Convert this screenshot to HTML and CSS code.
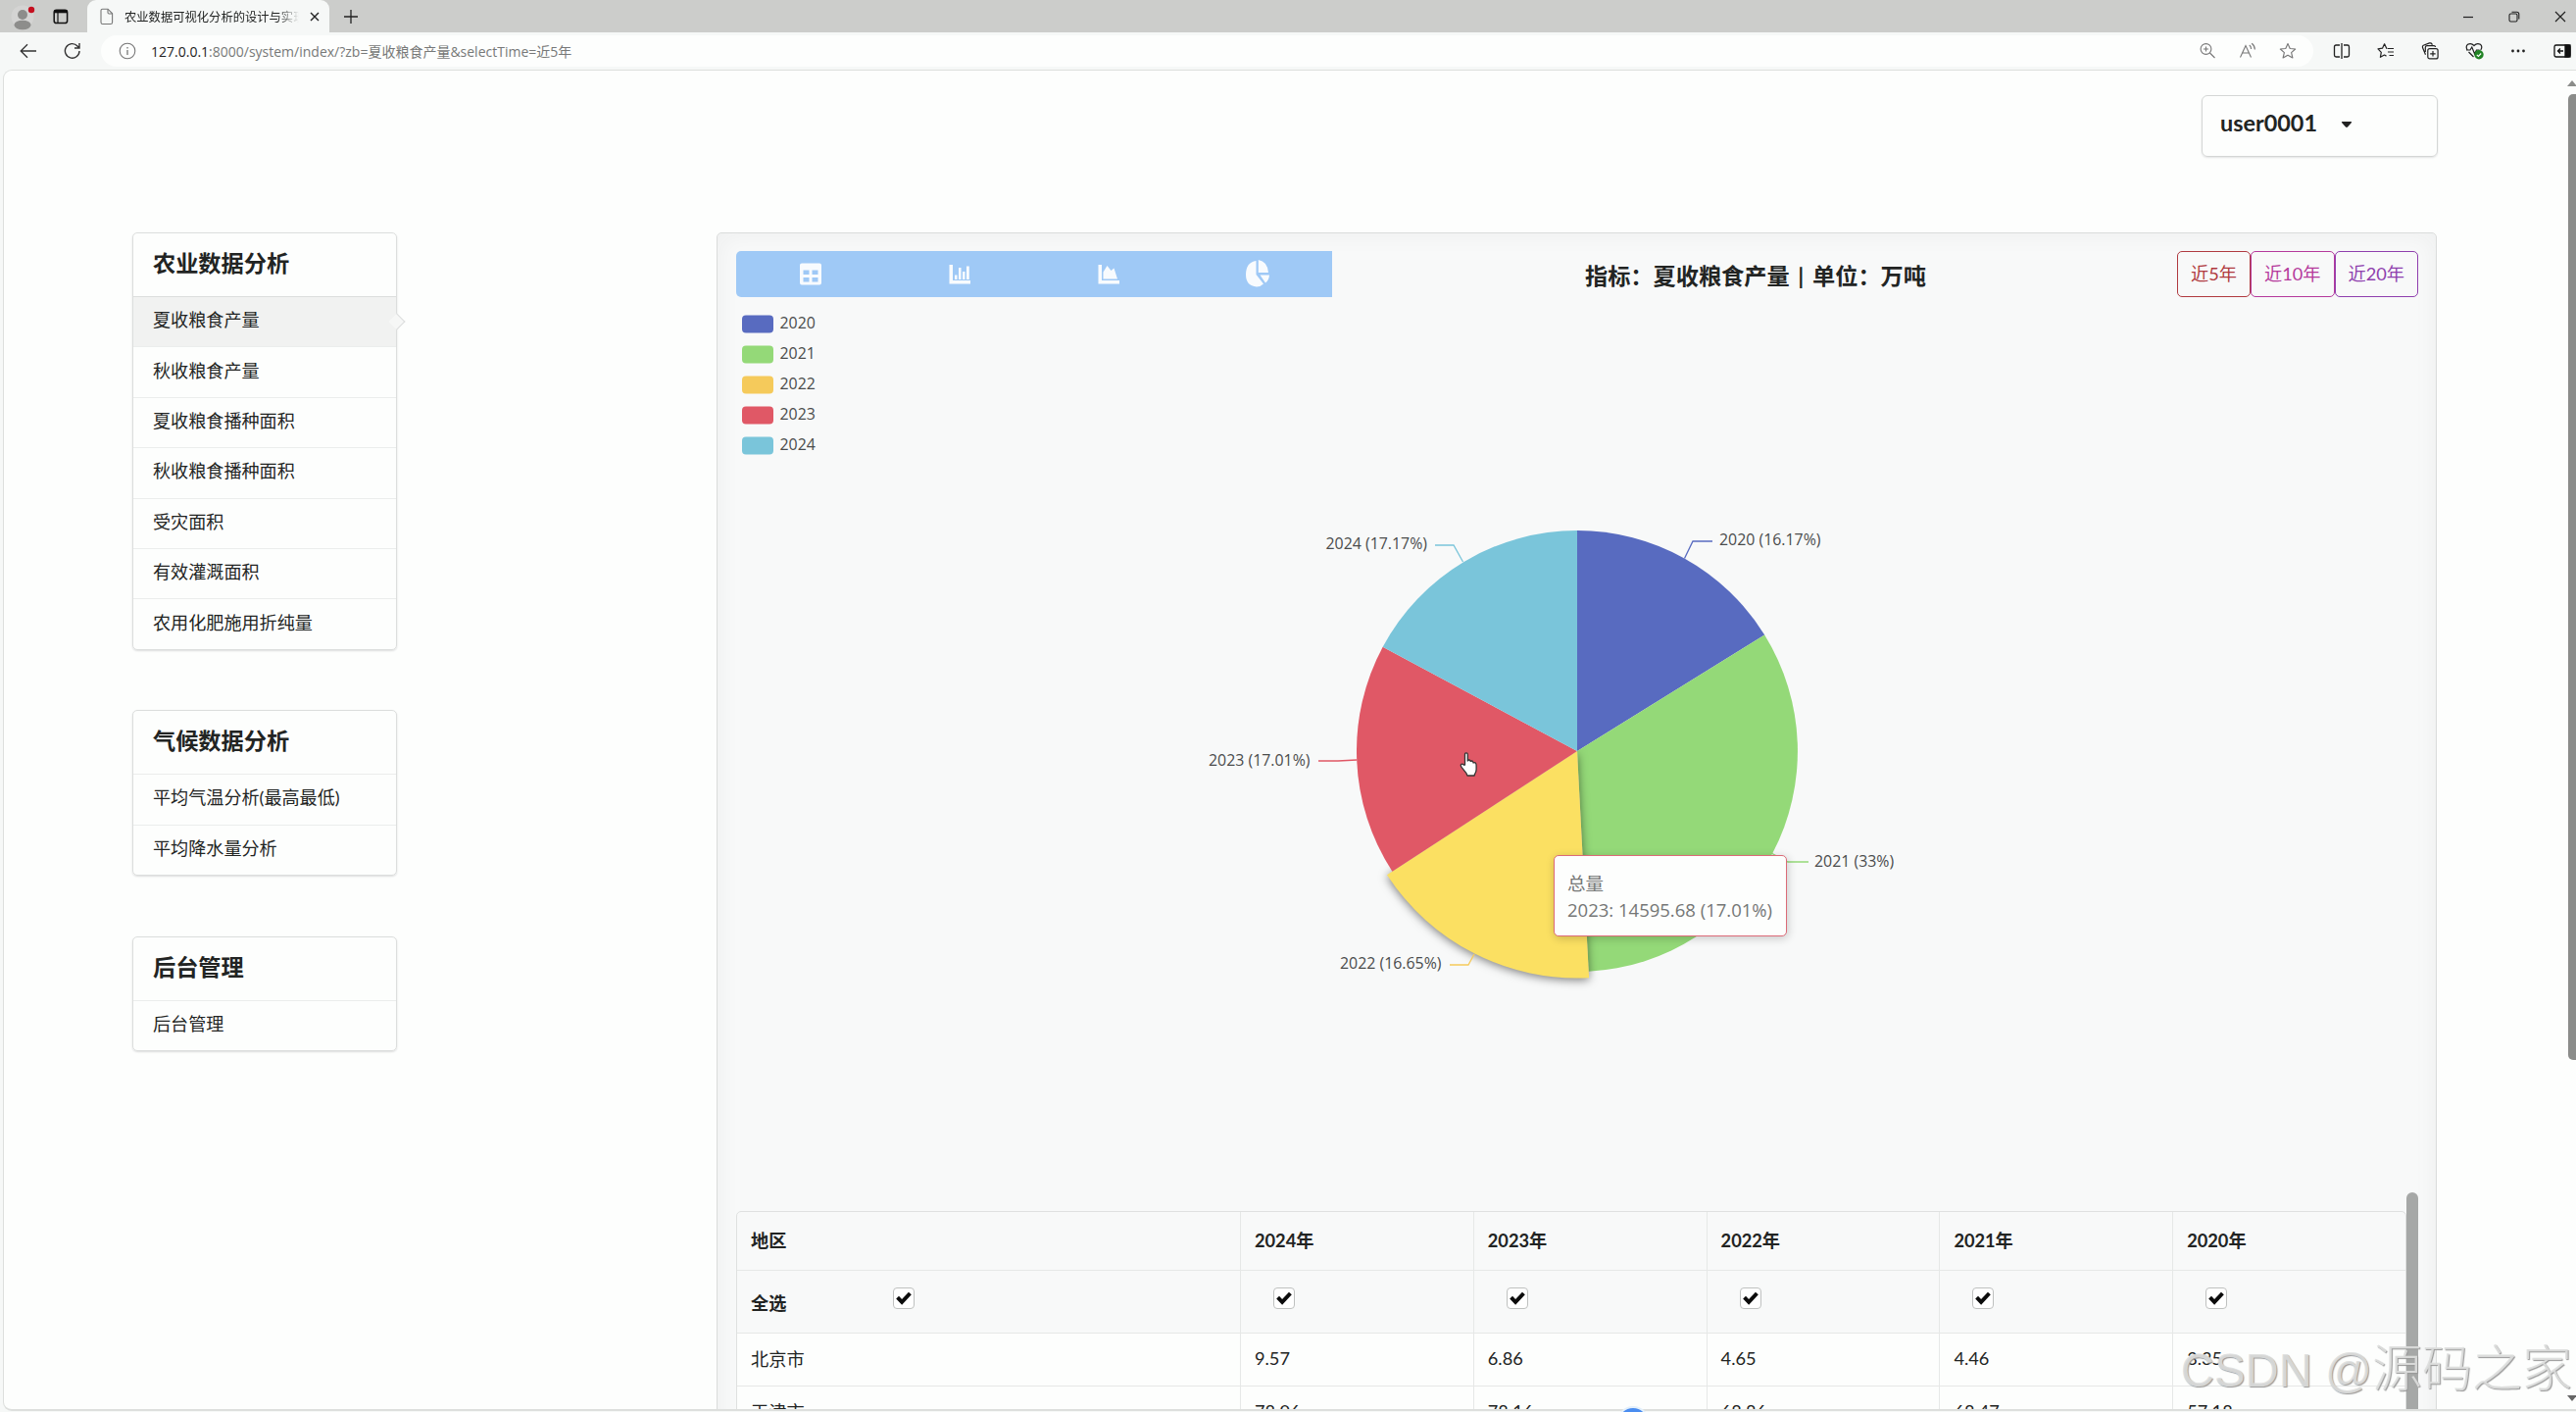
FILE: index.html
```html
<!DOCTYPE html>
<html lang="zh-CN">
<head>
    <meta charset="UTF-8">
    <meta name="viewport" content="width=device-width, initial-scale=1.0">
    <title>农业数据可视化分析的设计与实现</title>
    <link rel="stylesheet" href="styles.css">
</head>
<body>
    <!-- Browser tabs -->
    <div class="tab-strip">
        <svg class="profile" width="28" height="28" viewBox="0 0 28 28">
            <circle cx="13" cy="14" r="11.5" fill="#d4d4d3"/>
            <circle cx="13" cy="12" r="5" fill="#8d8d8b"/>
            <ellipse cx="13" cy="22.5" rx="8.5" ry="4.8" fill="#8d8d8b"/>
            <circle cx="22" cy="7" r="3.2" fill="#c50f1f"/>
        </svg>
        <svg class="tab-menu" width="16" height="16" viewBox="0 0 16 16" fill="none" stroke="#111" stroke-width="1.5">
            <rect x="1.2" y="1.2" width="13.4" height="13.4" rx="2.4"/>
            <path d="M1.5 2.8h13" stroke-width="3"/>
            <path d="M5 4v10.500" stroke-width="1.2"/>
        </svg>
        <div class="tab">
            <svg width="14" height="18" viewBox="0 0 14 18" fill="none" stroke="#777" stroke-width="1.1">
                <path d="M2.500 1.200H8l4.600 4.600v8.900q0 1.800-1.800 1.800H2.800Q1 16.500 1 14.700V2.700q0-1.500 1.500-1.500z"/>
                <path d="M8 1.200v3.600q0 1.200 1.200 1.200h3.400"/>
            </svg>
            <span class="tab-title">农业数据可视化分析的设计与实现</span>
            <svg width="10" height="10" viewBox="0 0 10 10" stroke="#222" stroke-width="1.4"><path d="M1 1l8 8M9 1l-8 8"/></svg>
        </div>
        <svg class="new-tab" width="16" height="16" viewBox="0 0 16 16" stroke="#222" stroke-width="1.3"><path d="M8 1v14M1 8h14"/></svg>
        <div class="window-buttons">
            <svg width="12" height="12" viewBox="0 0 12 12" fill="none" stroke="#222" stroke-width="1.2"><path d="M1 6.500h10"/></svg>
            <svg width="12" height="12" viewBox="0 0 12 12" fill="none" stroke="#222" stroke-width="1.1">
                <rect x="1" y="3" width="8" height="8" rx="1.5"/>
                <path d="M3.500 1.300h5q2.300 0 2.300 2.300v5"/>
            </svg>
            <svg width="12" height="12" viewBox="0 0 12 12" fill="none" stroke="#222" stroke-width="1.2"><path d="M1 1l10 10M11 1L1 11"/></svg>
        </div>
    </div>

    <!-- Address bar -->
    <div class="toolbar">
        <svg class="nav-back" width="18" height="16" viewBox="0 0 18 16" fill="none" stroke="#333" stroke-width="1.3"><path d="M17 8H1.500M8 1.200L1.200 8 8 14.800"/></svg>
        <svg class="nav-reload" width="18" height="18" viewBox="0 0 18 18" fill="none" stroke="#333" stroke-width="1.4"><path d="M16 9a7.300 7.300 0 1 1-2-5.100L16 6M16 1v5h-5"/></svg>
        <div class="address">
            <svg width="18" height="18" viewBox="0 0 18 18" fill="none" stroke="#777" stroke-width="1.1">
                <circle cx="9" cy="9" r="7.800"/>
                <path d="M9 8v5M9 5v1.500" stroke-width="1.3"/>
            </svg>
            <span class="url"><b>127.0.0.1</b>:8000/system/index/?zb=夏收粮食产量&amp;selectTime=近5年</span>
            <div class="address-tools">
                <svg width="18" height="18" viewBox="0 0 18 18" fill="none" stroke="#777" stroke-width="1.1">
                    <circle cx="7.500" cy="7" r="5.400"/><path d="M11.500 11l5 5M7.500 4.500v5M5 7h5"/>
                </svg>
                <svg width="18" height="18" viewBox="0 0 18 18" fill="none" stroke="#777" stroke-width="1.1">
                    <path d="M1.500 15.500L7 3.500l5.500 12M3.600 11h6.900M10.800 3q1.700 1.300 1.800 4M13.200 1.300q3 2.200 3.200 6.200"/>
                </svg>
                <svg width="18" height="18" viewBox="0 0 18 18" fill="none" stroke="#777" stroke-width="1.1">
                    <path d="M9 1.500l2.200 5 5.500.500-4.100 3.600 1.300 5.400L9 13.200 4.100 16l1.300-5.400L1.300 7l5.500-.500z" stroke-linejoin="round"/>
                </svg>
            </div>
        </div>
        <div class="toolbar-icons">
            <svg width="18" height="18" viewBox="0 0 18 18" fill="none" stroke="#222" stroke-width="1.3">
                <path d="M7 3H3.200Q1.500 3 1.500 4.700v8.600Q1.500 15 3.200 15H7M11 3h3.800q1.700 0 1.700 1.700v8.600q0 1.700-1.700 1.700H11M9 1v16"/>
            </svg>
            <svg width="18" height="18" viewBox="0 0 18 18" fill="none" stroke="#222" stroke-width="1.2">
                <path d="M10.500 6.300H9.700L7.600 1.800 5.500 6.200l-4.500.7 3.300 3.400-.9 5 4.100-2.300 2 1.100M11 6.500h6M11 10h6M12.500 13.500H17" stroke-linejoin="round"/>
            </svg>
            <svg width="18" height="18" viewBox="0 0 18 18" fill="none" stroke="#222" stroke-width="1.2">
                <rect x="6.800" y="6.600" width="10.300" height="10.300" rx="2"/>
                <path d="M12 9v5.500M9.200 11.800h5.500M4.500 12.700L1.700 6q-.9-2.200 1.200-3L8.500.900q1.700-.5 2.500 1l.4.900M4.300 10V5.500q0-1.800 1.800-1.800h7q1.300 0 1.500 1.300"/>
            </svg>
            <svg class="health" width="20" height="18" viewBox="0 0 20 18" fill="none" stroke="#222" stroke-width="1.2">
                <path d="M2.200 8Q0 4.500 2.600 2.300 6 .300 9 3.500q3-3.200 6.400-1.200Q18 4.500 15.800 8M3.500 10l5 5M1 8h4l1.800-3 2.800 7L11.500 8h3"/>
                <circle cx="14" cy="12.800" r="4.700" fill="#218325" stroke="none"/>
                <path d="M11.800 12.900l1.600 1.500 2.800-2.900" stroke="#fff" stroke-width="1.100"/>
            </svg>
            <svg width="18" height="18" viewBox="0 0 18 18" fill="#222"><circle cx="3.500" cy="9" r="1.400"/><circle cx="9" cy="9" r="1.400"/><circle cx="14.500" cy="9" r="1.400"/></svg>
            <svg width="18" height="18" viewBox="0 0 18 18" fill="none" stroke="#111" stroke-width="1.300">
                <rect x="1" y="3" width="16" height="12" rx="1.800"/>
                <rect x="12" y="3" width="5" height="12" fill="#111"/>
                <path d="M10 9H4.500M7 6.500L4.500 9 7 11.500"/>
            </svg>
        </div>
    </div>

    <div class="page">
        <div class="content">
            <div class="account">
                <span>user0001</span>
                <svg width="12" height="8" viewBox="0 0 12 8" fill="#222"><path d="M1.500 1h9q1.200.3.300 1.300L7 6.600q-1 .9-2 0L1.200 2.300Q.300 1.300 1.500 1z"/></svg>
            </div>

            <div class="main">
                <!-- Side menus -->
                <div class="sidebar">
                    <ul class="menu">
                        <li class="menu-header">农业数据分析</li>
                        <li class="active">夏收粮食产量</li>
                        <li>秋收粮食产量</li>
                        <li>夏收粮食播种面积</li>
                        <li>秋收粮食播种面积</li>
                        <li>受灾面积</li>
                        <li>有效灌溉面积</li>
                        <li>农用化肥施用折纯量</li>
                    </ul>
                    <ul class="menu">
                        <li class="menu-header">气候数据分析</li>
                        <li>平均气温分析(最高最低)</li>
                        <li>平均降水量分析</li>
                    </ul>
                    <ul class="menu">
                        <li class="menu-header">后台管理</li>
                        <li>后台管理</li>
                    </ul>
                </div>

                <div class="panel">
                    <div class="panel-head">
                        <div class="chart-types">
                            <button><svg width="24" height="26" viewBox="0 0 24 26">
                                <path fill="#fff" fill-rule="evenodd" d="M3 2.500h18q2 0 2 2v18q0 2-2 2H3q-2 0-2-2v-18q0-2 2-2zM4.500 9.500v4.500h6V9.500zM13.500 9.500v4.500h6V9.500zM4.500 17v4.500h6V17zM13.500 17v4.500h6V17z"/>
                            </svg></button>
                            <button><svg width="24" height="26" viewBox="0 0 24 26" fill="#fff">
                                <path d="M1.500 4H5v16h18v3.500H1.500zM7 14.500h2.500V19H7zM11 7h2.500v12H11zM15 11h2.500v8H15zM19 5.500h2.800V19H19z"/>
                            </svg></button>
                            <button><svg width="24" height="26" viewBox="0 0 24 26" fill="#fff">
                                <path d="M1.500 4H5v16h18v3.500H1.500zM6.500 18.500v-7L10.500 5l4 5 3-2.500 3.500 11z"/>
                            </svg></button>
                            <button><svg width="26" height="28" viewBox="0 0 26 28" fill="#fff">
                                <path d="M11.500 1v14l7.500 9.500Q16 27.500 12 27.500 1 26.500 1 15 1 2.500 11.500 1zM13.800 0Q23 1.500 24 13H13.800zM15.500 15.500H25q-.3 5-4 8z"/>
                            </svg></button>
                        </div>
                        <h3 class="title">指标：夏收粮食产量 | 单位：万吨</h3>
                        <div class="ranges">
                            <button class="red">近5年</button>
                            <button class="pink">近10年</button>
                            <button class="purple">近20年</button>
                        </div>
                    </div>

                    <div class="chart">
                        <svg width="1704" height="913" viewBox="0 0 1704 913">
                            <!-- Legend -->
                            <g class="legend">
                                <rect x="6" y="18.500" width="32" height="18" rx="4" fill="#586bc0"/><text x="44.500" y="32">2020</text>
                                <rect x="6" y="49.500" width="32" height="18" rx="4" fill="#94d978"/><text x="44.500" y="63">2021</text>
                                <rect x="6" y="80.500" width="32" height="18" rx="4" fill="#f5ca5b"/><text x="44.500" y="94">2022</text>
                                <rect x="6" y="111.500" width="32" height="18" rx="4" fill="#e05866"/><text x="44.500" y="125">2023</text>
                                <rect x="6" y="142.500" width="32" height="18" rx="4" fill="#7ac5da"/><text x="44.500" y="156">2024</text>
                            </g>
                            <!-- Slices, centred on the pie -->
                            <g transform="translate(858 463)">
                                <path fill="#586bc0" d="M0 0V-225A225 225 0 0 1 191.200-118.500z"/>
                                <path fill="#94d978" d="M0 0L191.200-118.500A225 225 0 0 1 11.700 224.700z"/>
                                <path class="raised" fill="#fbe062" d="M0 0L12.100 231.200A231.500 231.500 0 0 1-194 126.300z"/>
                                <path fill="#e05866" d="M0 0L-188.600 122.700A225 225 0 0 1-198.300-106.300z"/>
                                <path fill="#7ac5da" d="M0 0L-198.300-106.300A225 225 0 0 1 0-225z"/>
                                <g fill="none" stroke-width="1.300">
                                    <path stroke="#586bc0" d="M109.500-196.500L118-214h20"/>
                                    <path stroke="#94d978" d="M198 104L215 113h21"/>
                                    <path stroke="#f5ca5b" d="M-105 207L-111 218h-19"/>
                                    <path stroke="#e05866" d="M-225 9L-244 10h-20"/>
                                    <path stroke="#7ac5da" d="M-116.500-193L-126-210h-19"/>
                                </g>
                                <text x="145" y="-210">2020 (16.17%)</text>
                                <text x="242" y="118">2021 (33%)</text>
                                <text x="-242" y="221.500">2022 (16.65%)</text>
                                <text x="-376" y="15">2023 (17.01%)</text>
                                <text x="-256.500" y="-206">2024 (17.17%)</text>
                            </g>
                            <!-- Pointer -->
                            <path class="pointer" transform="translate(738 464)" fill="#fff" stroke="#333" stroke-width="1.300" stroke-linejoin="round" d="M5.500 13V2.500q0-1.700 1.400-1.700t1.400 1.700V9Q9 7.500 10.600 8.200l.6 1.200q1.600-1 2.600.6l.3 1q1.500-.9 2.500.5.500.8.500 2.300v4q0 2.500-1.500 4.500l-.5 1.700H8l-1-2.300-4.800-6q-1.700-2.500-.3-3.300 1.200-.6 2.300.6z"/>
                        </svg>
                        <div class="tooltip">总量<br>2023: 14595.68 (17.01%)</div>
                    </div>

                    <div class="table-scroll">
                        <table>
                            <thead>
                                <tr><th class="region">地区</th><th>2024年</th><th>2023年</th><th>2022年</th><th>2021年</th><th>2020年</th></tr>
                                <tr class="checks"><th><div class="check-all"><span>全选</span><i class="checkbox"></i></div></th><th><i class="checkbox"></i></th><th><i class="checkbox"></i></th><th><i class="checkbox"></i></th><th><i class="checkbox"></i></th><th><i class="checkbox"></i></th></tr>
                            </thead>
                            <tbody>
                                <tr><td>北京市</td><td>9.57</td><td>6.86</td><td>4.65</td><td>4.46</td><td>3.35</td></tr>
                                <tr><td>天津市</td><td>78.06</td><td>78.16</td><td>68.86</td><td>68.47</td><td>57.18</td></tr>
                            </tbody>
                        </table>
                        <div class="table-thumb"></div>
                    </div>
                </div>
            </div>
        </div>
        <div class="scrollbar">
            <svg width="10" height="6" viewBox="0 0 10 6" fill="#8b8c8a"><path d="M5 0l5 6H0z"/></svg>
            <div class="thumb"></div>
            <svg width="10" height="6" viewBox="0 0 10 6" fill="#666"><path d="M5 6L0 0h10z"/></svg>
        </div>
    </div>

    <div class="bubble"></div>
    <div class="watermark"><span>CSDN @</span>源码之家</div>

    <script>
        // Same tick for every checked box
        document.querySelectorAll(".checkbox").forEach(box => {
            box.innerHTML = '<svg width="16" height="14" viewBox="0 0 16 14" fill="none" stroke="#0b0b0b" stroke-width="4"><path d="M1.600 6.200l4.500 4.600 8.300-8.800"/></svg>';
        });
    </script>
</body>
</html>
```
FILE: styles.css
```css
* {
    box-sizing: border-box;
}

body {
    margin: 0;
    height: 1440px;
    display: flex;
    flex-direction: column;
    position: relative;
    overflow: hidden;
    background: #f6f8f7;
    color: #222423;
    font-family: Lato, "Noto Sans CJK SC", sans-serif;
}

svg {
    display: block;
    flex: none;
}

button {
    font: inherit;
    padding: 0;
}

/* Tabs */
.tab-strip {
    display: flex;
    align-items: center;
    height: 33px;
    flex: none;
    background: #cccdcb;
}

.profile {
    margin-left: 10px;
}

.tab-menu {
    margin-left: 16px;
}

.tab {
    display: flex;
    align-items: center;
    width: 247px;
    height: 33px;
    margin-left: 19px;
    padding-left: 13px;
    background: #f6f8f7;
    border-radius: 9px 9px 0 0;
}

.tab-title {
    width: 178px;
    margin: 0 11px 0 11px;
    overflow: hidden;
    white-space: nowrap;
    font: 12.3px "Open Sans", "Noto Sans CJK SC", sans-serif;
    -webkit-mask-image: linear-gradient(90deg, #000 88%, transparent);
    mask-image: linear-gradient(90deg, #000 88%, transparent);
}

.new-tab {
    margin-left: 14px;
}

.window-buttons {
    display: flex;
    gap: 35px;
    margin-left: auto;
    margin-right: 10px;
}

/* Address bar */
.toolbar {
    display: flex;
    align-items: center;
    height: 39px;
    flex: none;
    padding: 0 0 1px 20px;
}

.nav-reload {
    margin: 0 28px 0 27px;
}

.address {
    display: flex;
    align-items: center;
    width: 2257px;
    height: 32px;
    margin-left: -8px;
    padding: 0 17px 0 18px;
    border-radius: 16px;
    background: #fdfefd;
    color: #777978;
    font: 14px "Open Sans", "Noto Sans CJK SC", sans-serif;
}

.url {
    margin-left: 15px;
    white-space: nowrap;
}

.url b {
    color: #222;
    font-weight: 400;
}

.address-tools {
    display: flex;
    gap: 23px;
    margin-left: auto;
}

.toolbar-icons {
    display: flex;
    gap: 27px;
    margin-left: 20px;
}

.health {
    margin-right: -2px;
}

/* Page */
.page {
    flex: none;
    display: flex;
    height: 1367px;
    margin: -1px 0 0 3px;
    overflow: hidden;
    background: #fdfefd;
    border: 1px solid #dddfdd;
    border-width: 1px 0 2px 1px;
    border-radius: 9px 0 0 9px;
    height: 1368px;
}

.content {
    flex: 1;
    padding: 25px 133px 0 131px;
}

.account {
    display: flex;
    align-items: center;
    width: 241px;
    height: 63px;
    margin-left: auto;
    padding: 0 0 7px 18px;
    border: 1px solid #d4d6d5;
    border-radius: 6px;
    box-shadow: 0 1px 2px rgba(34, 36, 38, .12);
    font-size: 23.4px;
    font-weight: 700;
}

.account svg {
    margin: 4px 0 0 24px;
}

.main {
    display: flex;
    justify-content: space-between;
    margin: 77px 1px 0 0;
}

/* Side menus */
.sidebar {
    width: 270px;
    display: flex;
    flex-direction: column;
    gap: 61.500px;
}

.menu {
    margin: 0;
    padding: 0;
    list-style: none;
    border: 1px solid #dcdedd;
    border-radius: 5px;
    box-shadow: 0 1px 2px rgba(34, 36, 38, .15);
    font-size: 18.1px;
}

.menu li {
    position: relative;
    display: flex;
    align-items: center;
    height: 51.4px;
    padding: 0 0 6px 20px;
    border-top: 1px solid #ebedec;
}

.menu .menu-header {
    height: 64px;
    border-top: 0;
    font-size: 23.2px;
    font-weight: 700;
}

.menu .active {
    background: #f1f2f1;
    border-color: #dcdedd;
}

.menu .active::after {
    content: "";
    position: absolute;
    top: 19px;
    right: -7px;
    width: 11px;
    height: 11px;
    background: #f6f7f6;
    border: 1px solid #dcdedd;
    border-width: 1px 1px 0 0;
    transform: rotate(45deg);
}

/* Analysis panel */
.panel {
    width: 1755px;
    height: 1300px;
    padding: 18px 18px 0 19px;
    background: #f8f9f9;
    border: 1px solid #dadcdb;
    border-radius: 5px;
    box-shadow: inset 0 0 26px rgba(34, 36, 38, .05);
}

.panel-head {
    display: flex;
    align-items: center;
    height: 47px;
}

.chart-types {
    display: flex;
    width: 608px;
    height: 47px;
    border-radius: 5px 0 0 5px;
    background: #9fc9f6;
}

.chart-types button {
    flex: 1;
    display: flex;
    justify-content: center;
    align-items: center;
    padding-bottom: 2px;
    border: 0;
    background: none;
    opacity: .93;
}

.title {
    margin: 0 0 0 258px;
    font-size: 23.2px;
    word-spacing: 3px;
    white-space: nowrap;
}

.ranges {
    display: flex;
    margin-left: auto;
}

.ranges button {
    height: 47px;
    width: 85.500px;
    padding-bottom: 4px;
    border: 1.500px solid;
    border-radius: 5px;
    background: none;
    font-size: 18.2px;
}

.ranges .red {
    width: 75px;
    color: #b03a40;
}

.ranges .pink {
    color: #b5399c;
}

.ranges .purple {
    color: #8f3fae;
}

/* Pie chart */
.chart {
    position: relative;
    height: 913px;
    font-family: "Open Sans", "Noto Sans CJK SC", sans-serif;
}

.chart text {
    font-size: 15.9px;
    fill: #4a4c4c;
}

.raised {
    filter: drop-shadow(0 2px 5px rgba(0, 0, 0, .5));
}

.tooltip {
    position: absolute;
    left: 834px;
    top: 569px;
    width: 238px;
    height: 83px;
    padding: 14px 0 0 13px;
    background: #fdfefd;
    border: 1.500px solid #dc6b78;
    border-radius: 5px;
    box-shadow: 1px 2px 10px rgba(0, 0, 0, .2);
    color: #757776;
    font-size: 18.5px;
    line-height: 27px;
    white-space: nowrap;
}

/* Data table */
.table-scroll {
    display: flex;
    height: 223px;
    overflow: hidden;
    align-items: flex-start;
}

.table-thumb {
    width: 12px;
    height: 260px;
    border-radius: 6px;
    background: #a6a8a7;
}

table {
    width: 1704px;
    margin-top: 19px;
    table-layout: fixed;
    border-collapse: separate;
    border-spacing: 0;
    border: 1px solid #dfe1e0;
    border-radius: 5px 5px 0 0;
    font-size: 18.2px;
}

th,
td {
    height: 54.300px;
    padding: 0 0 3px 14px;
    border-left: 1px solid #e6e8e7;
    border-top: 1px solid #e6e8e7;
    text-align: left;
}

td {
    background: #fdfefd;
}

th {
    height: 59px;
    padding-bottom: 4px;
}

th:first-child,
td:first-child {
    border-left: 0;
}

thead tr:first-child th {
    border-top: 0;
}

.region {
    width: 513px;
}

.checks th {
    height: 64px;
    padding: 0 0 0 33px;
}

.checks th:first-child {
    padding-left: 14px;
}

.check-all {
    display: flex;
    align-items: center;
}

.check-all span {
    width: 145px;
}

.checkbox {
    display: inline-flex;
    justify-content: center;
    align-items: center;
    width: 22px;
    height: 22px;
    margin-bottom: 8px;
    vertical-align: middle;
    border: 1px solid #bfc1c0;
    border-radius: 4px;
    background: #fff;
}

/* Page scrollbar */
.scrollbar {
    width: 8px;
    padding-top: 10px;
    display: flex;
    flex-direction: column;
    align-items: center;
}

.scrollbar .thumb {
    width: 8px;
    height: 985px;
    margin: 8px 0 342px;
    border-radius: 5px 0 0 5px;
    background: #8b8c8a;
}

/* Overlays */
.bubble {
    position: absolute;
    left: 1649px;
    top: 1434px;
    width: 34px;
    height: 34px;
    border: 2px solid #e4f0fb;
    border-radius: 50%;
    background: #4a8df0;
}

.watermark {
    position: absolute;
    right: 4px;
    bottom: 5px;
    color: rgba(222, 223, 222, .9);
    font: 300 51px/74px "Noto Sans CJK SC", sans-serif;
    text-shadow: 1px 1px 1px #999;
    white-space: nowrap;
}

.watermark span {
    font-family: "Liberation Sans", sans-serif;
    font-size: 47.300px;
}
```
